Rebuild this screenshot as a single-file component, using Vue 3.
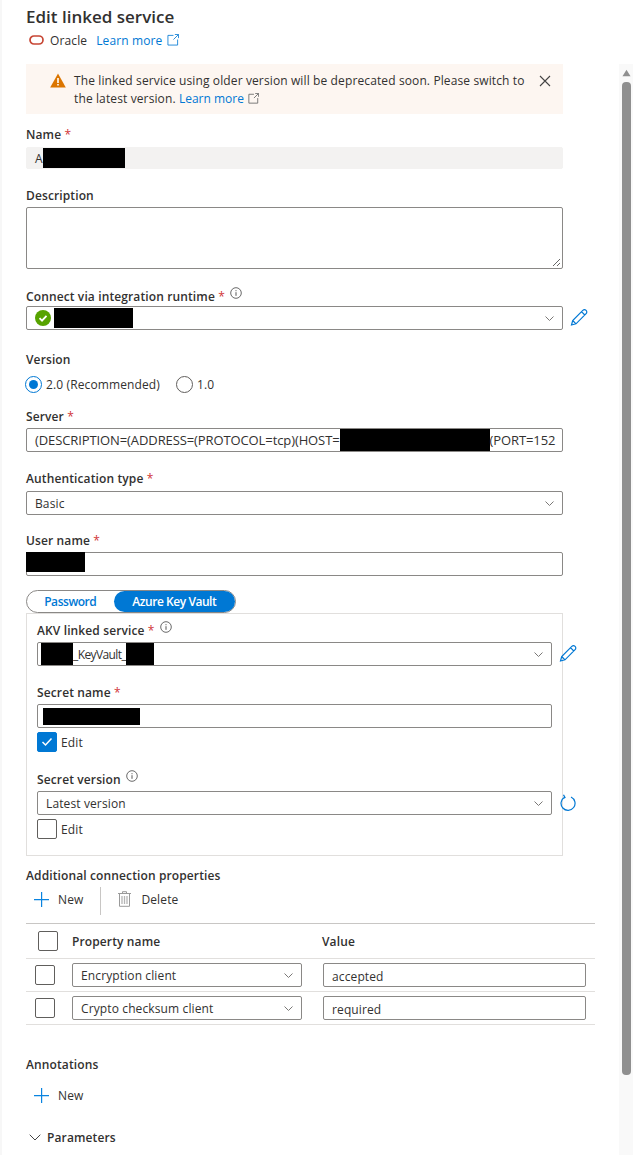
<script setup>
</script>

<template>
  <div class="page">
    <div class="scrollbar">
      <svg class="sb-arrow" width="10" height="8" viewBox="0 0 10 8"><path d="M5 .5 9.500 7.500H.5z" fill="#8f8f8f"/></svg>
      <div class="sb-thumb"></div>
    </div>

    <h1 class="title">Edit linked service</h1>
    <div class="subtitle">
      <svg class="oracle" width="15" height="10" viewBox="0 0 15 10"><rect x="1" y="1" width="13" height="8" rx="4" fill="none" stroke="#c74634" stroke-width="1.700"/></svg>
      <span>Oracle</span>
      <a class="link learn">Learn more</a>
      <svg width="12" height="12" viewBox="0 0 13 13" class="ext"><path d="M7 1.500H1v10.500h10.500V6M8.500.5h4v4M12.300.7 7 6" fill="none" stroke="#0078d4" stroke-width=".9"/></svg>
    </div>

    <div class="banner">
      <svg class="warn" width="16" height="15" viewBox="0 0 16 15"><path d="M8 .5 15.800 14.500H.2z" fill="#db7500"/><path d="M7.200 5h1.600v5H7.200zM7.200 11h1.600v1.600H7.200z" fill="#fff"/></svg>
      <div class="banner-text">The linked service using older version will be deprecated soon. Please switch to the latest version. <a class="link tight">Learn more</a><svg width="11" height="11" viewBox="0 0 13 13" class="ext2"><path d="M7 1.500H1v10.500h10.500V6M8.500.5h4v4M12.300.7 7 6" fill="none" stroke="#666" stroke-width="1"/></svg>
      </div>
      <svg class="close" width="12" height="12" viewBox="0 0 12 12"><path d="M1 1 11 11M11 1 1 11" stroke="#444" stroke-width="1.100"/></svg>
    </div>

    <div class="field f-name">
      <label>Name <i>*</i></label>
      <div class="input disabled"><span>A</span><b class="redact r-name"></b></div>
    </div>

    <div class="field f-desc">
      <label>Description</label>
      <div class="textarea">
        <svg class="grip" width="9" height="9" viewBox="0 0 9 9"><path d="M1 8 8 1M5 8 8 5" stroke="#666" stroke-width="1"/></svg>
      </div>
    </div>

    <div class="field f-ir">
      <label>Connect via integration runtime <i>*</i> <svg class="info" width="12" height="12" viewBox="0 0 12 12"><circle cx="6" cy="6" r="5.300" fill="none" stroke="#444" stroke-width=".8"/><path d="M6 5.200v3.600M6 3.200v1" stroke="#444" stroke-width=".9"/></svg></label>
      <div class="with-action">
        <div class="input select">
          <svg class="ok" width="16" height="16" viewBox="0 0 16 16"><circle cx="8" cy="8" r="8" fill="#57a300"/><path d="M4.500 8.200 7 10.700 11.500 5.800" fill="none" stroke="#fff" stroke-width="1.800"/></svg>
          <b class="redact r-ir"></b>
          <svg class="chev" width="9" height="5" viewBox="0 0 9 5"><path d="M.5.500 4.500 4.500 8.500.5" fill="none" stroke="#7a7876" stroke-width="1"/></svg>
        </div>
        <svg class="pencil" width="18" height="19" viewBox="0 0 18 18"><path d="M1.500 16.500 2.700 12 12.800 1.900a1.800 1.800 0 0 1 3.300 3.300L6 15.300zM2.700 12 6 15.300M11.500 3.200l3.300 3.300" fill="none" stroke="#0078d4" stroke-width="1.200"/></svg>
      </div>
    </div>

    <div class="field f-ver">
      <label>Version</label>
      <div class="radios">
        <span class="radio on"><em></em></span><span class="rtext">2.0 (Recommended)</span>
        <span class="radio second"></span><span class="rtext">1.0</span>
      </div>
    </div>

    <div class="field f-server">
      <label>Server <i>*</i></label>
      <div class="input server"><span>(DESCRIPTION=(ADDRESS=(PROTOCOL=tcp)(HOST=</span><b class="redact r-server"></b><span>(PORT=152</span></div>
    </div>

    <div class="field f-auth">
      <label>Authentication type <i>*</i></label>
      <div class="input select"><span>Basic</span>
        <svg class="chev" width="9" height="5" viewBox="0 0 9 5"><path d="M.5.500 4.500 4.500 8.500.5" fill="none" stroke="#7a7876" stroke-width="1"/></svg>
      </div>
    </div>

    <div class="field f-user">
      <label>User name <i>*</i></label>
      <div class="input user"><b class="redact r-user"></b></div>
    </div>

    <div class="toggle">
      <span class="tog">Password</span>
      <span class="tog active">Azure Key Vault</span>
    </div>
    <div class="akv">
      <div class="field f-akv">
        <label>AKV linked service <i>*</i> <svg class="info" width="12" height="12" viewBox="0 0 12 12"><circle cx="6" cy="6" r="5.300" fill="none" stroke="#444" stroke-width=".8"/><path d="M6 5.200v3.600M6 3.200v1" stroke="#444" stroke-width=".9"/></svg></label>
        <div class="with-action">
          <div class="input select akv-sel">
            <b class="redact r-akv1"></b><span class="kv">_KeyVault_</span><b class="redact r-akv2"></b>
            <svg class="chev" width="9" height="5" viewBox="0 0 9 5"><path d="M.5.500 4.500 4.500 8.500.5" fill="none" stroke="#7a7876" stroke-width="1"/></svg>
          </div>
          <svg class="pencil" width="18" height="19" viewBox="0 0 18 18"><path d="M1.500 16.500 2.700 12 12.800 1.900a1.800 1.800 0 0 1 3.300 3.300L6 15.300zM2.700 12 6 15.300M11.500 3.200l3.300 3.300" fill="none" stroke="#0078d4" stroke-width="1.200"/></svg>
        </div>
      </div>
      <div class="field f-secret">
        <label>Secret name <i>*</i></label>
        <div class="input"><b class="redact r-secret"></b></div>
        <div class="check-row">
          <span class="check on"><svg width="12" height="10" viewBox="0 0 12 10"><path d="M1.500 5 4.500 8 10.500 1.500" fill="none" stroke="#fff" stroke-width="1.500"/></svg></span>
          <span>Edit</span>
        </div>
      </div>
      <div class="field f-ver2">
        <label>Secret version <svg class="info" width="12" height="12" viewBox="0 0 12 12"><circle cx="6" cy="6" r="5.300" fill="none" stroke="#444" stroke-width=".8"/><path d="M6 5.200v3.600M6 3.200v1" stroke="#444" stroke-width=".9"/></svg></label>
        <div class="with-action">
          <div class="input select"><span>Latest version</span>
            <svg class="chev" width="9" height="5" viewBox="0 0 9 5"><path d="M.5.500 4.500 4.500 8.500.5" fill="none" stroke="#7a7876" stroke-width="1"/></svg>
          </div>
          <svg class="refresh" width="16" height="17" viewBox="0 0 16 17"><path d="M4.500 3.300A7 7 0 1 0 11 3M3.500 .8 5 3.600 2.200 5" fill="none" stroke="#0078d4" stroke-width="1.200"/></svg>
        </div>
        <div class="check-row">
          <span class="check"></span>
          <span>Edit</span>
        </div>
      </div>
    </div>

    <div class="section add-props">Additional connection properties</div>
    <div class="toolbar">
      <span class="tool">
        <svg width="15" height="15" viewBox="0 0 15 15"><path d="M7 0h1.200v15H7zM0 7h15v1.200H0z" fill="#0a84e0"/></svg>
        <span>New</span>
      </span>
      <span class="tool-sep"></span>
      <span class="tool del">
        <svg width="13" height="16" viewBox="0 0 13 16"><path d="M4.500 2V.7h4V2M0 2.500h13M1.500 2.500V15.300h10V2.500" fill="none" stroke="#9a9a9a" stroke-width="1"/><path d="M4 5v8M6.500 5v8M9 5v8" stroke="#b5b5b5" stroke-width="1.300"/></svg>
        <span>Delete</span>
      </span>
    </div>

    <div class="table">
      <div class="thead">
        <span class="check head-check"></span>
        <span class="th c-name">Property name</span>
        <span class="th">Value</span>
      </div>
      <div class="tr">
        <span class="check"></span>
        <div class="input select cell-sel"><span>Encryption client</span>
          <svg class="chev" width="9" height="5" viewBox="0 0 9 5"><path d="M.5.500 4.500 4.500 8.500.5" fill="none" stroke="#7a7876" stroke-width="1"/></svg>
        </div>
        <div class="input cell-val"><span>accepted</span></div>
      </div>
      <div class="tr">
        <span class="check"></span>
        <div class="input select cell-sel"><span>Crypto checksum client</span>
          <svg class="chev" width="9" height="5" viewBox="0 0 9 5"><path d="M.5.500 4.500 4.500 8.500.5" fill="none" stroke="#7a7876" stroke-width="1"/></svg>
        </div>
        <div class="input cell-val"><span>required</span></div>
      </div>
    </div>

    <div class="section annotations">Annotations</div>
    <div class="toolbar ann-bar">
      <span class="tool">
        <svg width="15" height="15" viewBox="0 0 15 15"><path d="M7 0h1.200v15H7zM0 7h15v1.200H0z" fill="#0a84e0"/></svg>
        <span>New</span>
      </span>
    </div>
    <div class="params">
      <svg width="12" height="7" viewBox="0 0 12 7"><path d="M.7.700 6 6 11.300.7" fill="none" stroke="#444" stroke-width="1"/></svg>
      <span>Parameters</span>
    </div>
  </div>
</template>

<style>
html, body { margin: 0; background: #fff; overflow: hidden; }
</style>

<style scoped>
.page {
  position: relative;
  width: 633px;
  height: 1155px;
  overflow: hidden;
  box-sizing: border-box;
  padding: 0 0 0 24px;
  border-left: 2px solid #f7f7f7;
  background: #fff;
  font-family: "Open Sans", "Noto Sans", sans-serif;
  font-size: 12px;
  letter-spacing: 0.12px;
  color: #323130;
}
.scrollbar { position: absolute; right: 0; top: 64px; bottom: 0; width: 14px; background: #f9f9f9; box-sizing: border-box; padding: 5px 2px 0 3px; }
.sb-arrow { display: block; width: 9px; }
.sb-thumb { margin-top: 5px; height: 993px; border-radius: 4px; background: #8f8f8f; }
.title { margin: 0; padding-top: 6px; height: 30px; box-sizing: border-box; line-height: 22px; font-size: 17px; font-weight: 600; letter-spacing: 0; }
.subtitle { display: flex; align-items: center; height: 20px; }
.oracle { margin: 0 6px 0 3px; }
.link { color: #0078d4; }
.learn { margin-left: 9px; }
.tight { letter-spacing: 0; }
.ext { margin-left: 5px; }
.banner { position: relative; box-sizing: border-box; width: 537px; height: 50px; margin-top: 14px; padding: 8px 36px 0 48px; background: #fdf6f1; line-height: 18px; }
.warn { position: absolute; left: 24px; top: 9px; }
.close { position: absolute; right: 12px; top: 11px; }
.ext2 { margin-left: 4px; vertical-align: -1px; }
.field label { display: block; height: 18px; margin-bottom: 2px; line-height: 18px; font-weight: 600; white-space: nowrap; }
.field label i { color: #d13438; font-style: normal; font-weight: 400; }
.info { vertical-align: 2px; margin-left: 2px; }
.input { position: relative; display: flex; align-items: center; box-sizing: border-box; width: 537px; height: 24px; padding: 0 8px; border: 1px solid #8a8886; border-radius: 2px; background: #fff; white-space: nowrap; overflow: hidden; }
.disabled { height: 22px; border-color: #f3f2f1; background: #f3f2f1; }
.redact { display: block; flex: none; background: #000; }
.f-name { margin-top: 12px; }
.f-name label { margin-bottom: 3px; }
.r-name { width: 82px; height: 22px; }
.f-desc { margin-top: 18px; }
.textarea { position: relative; box-sizing: border-box; width: 537px; height: 62px; border: 1px solid #8a8886; border-radius: 2px; }
.grip { position: absolute; right: 1px; bottom: 1px; }
.f-ir { margin-top: 18px; }
.f-ir label { margin-bottom: 1px; }
.with-action { position: relative; }
.ok { margin-right: 3px; flex: none; }
.r-ir { width: 79px; height: 20px; }
.chev { position: absolute; right: 8px; top: 9px; }
.pencil { position: absolute; left: 544px; top: 2px; }
.f-ver { margin-top: 21px; }
.f-ver label { margin-bottom: 5px; }
.radios { display: flex; align-items: center; height: 20px; }
.radio { box-sizing: border-box; display: flex; align-items: center; justify-content: center; width: 17px; height: 17px; margin: 0 4px 0 -1px; border: 1px solid #605e5c; border-radius: 50%; }
.radio.on { border-color: #0078d4; }
.radio em { width: 9px; height: 9px; border-radius: 50%; background: #0078d4; }
.radio.second { margin-left: 16px; }
.f-server { margin-top: 14px; }
.server { font-size: 13px; letter-spacing: -0.1px; }
.r-server { width: 150px; height: 24px; }
.f-auth { margin-top: 18px; }
.f-auth label { margin-bottom: 3px; }
.f-user { margin-top: 17px; }
.user { padding: 0; overflow: visible; }
.r-user { width: 59px; height: 20px; margin: -4px 0 0 -1px; }
.toggle { display: flex; box-sizing: border-box; width: 210px; height: 23px; margin-top: 14px; border: 1px solid #8a8886; border-radius: 12px; font-weight: 600; letter-spacing: -0.45px; color: #0078d4; line-height: 21px; }
.tog { width: 87px; text-align: center; }
.tog.active { width: 122px; background: #0078d4; color: #fff; border-radius: 11px; }
.akv { box-sizing: border-box; width: 537px; height: 243px; padding: 7px 10px 0; border: 1px solid #e1dfdd; }
.akv .input { width: 515px; }
.akv .pencil { left: 522px; }
.f-akv label { margin-bottom: 3px; }
.akv-sel { padding-left: 3px; }
.kv { letter-spacing: -0.6px; }
.r-akv1 { width: 32px; height: 24px; }
.r-akv2 { width: 28px; height: 24px; }
.f-secret { margin-top: 18px; }
.r-secret { width: 97px; height: 17px; margin-left: -3px; }
.check-row { display: flex; align-items: center; margin-top: 4px; }
.check { box-sizing: border-box; display: flex; align-items: center; justify-content: center; flex: none; width: 20px; height: 20px; margin-right: 4px; border: 1px solid #605e5c; border-radius: 2px; background: #fff; }
.check.on { background: #0078d4; border-color: #0078d4; }
.f-ver2 { margin-top: 18px; }
.f-ver2 label { margin-bottom: 3px; }
.refresh { position: absolute; left: 523px; top: 3px; }
.section { font-weight: 600; line-height: 18px; height: 18px; }
.add-props { margin-top: 11px; margin-bottom: -1px; }
.toolbar { display: flex; align-items: center; height: 30px; }
.tool { display: flex; align-items: center; padding-left: 8px; }
.tool span { margin-left: 9px; }
.tool-sep { width: 1px; height: 28px; margin: 3px 0 0 17px; background: #c8c6c4; }
.del { padding-left: 17px; }
.del span { margin-left: 10px; }
.table { width: 569px; margin-top: 9px; }
.thead { display: flex; align-items: center; height: 35px; border-top: 1px solid #c8c6c4; box-sizing: border-box; font-weight: 600; }
.head-check { margin-left: 12px; margin-right: 14px; }
.c-name { width: 250px; }
.tr { display: flex; align-items: center; box-sizing: border-box; height: 33px; border-top: 1px solid #e1dfdd; padding-left: 9px; }
.tr:last-child { height: 34px; border-bottom: 1px solid #e1dfdd; }
.tr .check { margin-right: 17px; }
.cell-sel { width: 230px; }
.cell-val { width: 263px; margin-left: 21px; }
.cell-val span { padding-top: 2px; }
.annotations { margin-top: 31px; }
.ann-bar { margin-top: 6px; }
.params { display: flex; align-items: center; margin-top: 18px; padding-left: 3px; font-weight: 600; height: 18px; }
.params span { margin-left: 6px; }
</style>
